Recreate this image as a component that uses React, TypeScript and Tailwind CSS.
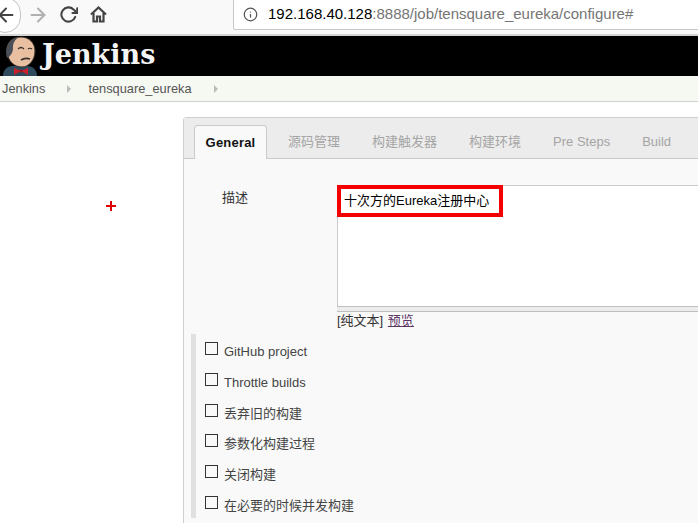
import { FiArrowLeft, FiArrowRight, FiInfo, FiRotateCw } from "react-icons/fi";

const FONT = "font-['Liberation_Sans','Noto_Sans_CJK_SC',sans-serif]";

const tabs = ["源码管理", "构建触发器", "构建环境", "Pre Steps", "Build"];
const options = ["GitHub project", "Throttle builds", "丢弃旧的构建", "参数化构建过程", "关闭构建", "在必要的时候并发构建"];

function HomeIcon() {
  return (
    <svg width="17" height="17" viewBox="0 0 17 17" fill="none" stroke="#444" strokeWidth="2.2">
      <path d="M1 8.5 8.5 1.5 16 8.5" />
      <path d="M3.5 7v8.5h3.5v-5h3v5h3.5V7" />
    </svg>
  );
}

function Butler() {
  return (
    <svg width="36" height="40" viewBox="0 0 36 40">
      <path d="M1 40c0-6 4-10 10-10h14c6 0 10 4 10 10z" fill="#2f4a5c" />
      <path d="M5 16C4 6 11 1 19 1c8 0 14 6 14 14 0 9-6 16-13 16C12 31 6 25 5 16z" fill="#e8bfa0" stroke="#3a3330" strokeWidth="1" />
      <path d="M5 22C2 12 6 3 17 1c-5 3-6 7-6 11 0 4-2 8-6 10z" fill="#4a4f58" />
      <path d="M16 13c2-2 4-2 6 0M26 13c1-1 3-1 4 0" fill="none" stroke="#3a3330" strokeWidth="1.2" />
      <path d="M19 24c3-2 6-2 9-1" fill="none" stroke="#3a3330" strokeWidth="1.600" />
      <path d="M12 32l7 3-7 4zM26 32l-7 3 7 4z" fill="#c8202c" />
      <circle cx="19" cy="35" r="1.600" fill="#a01820" />
    </svg>
  );
}

export default function App() {
  return (
    <div className={`w-[698px] h-[523px] overflow-hidden bg-white text-[13px] text-[#333] ${FONT}`}>
      <div className="h-[36px] bg-[#f9f9f9] border-b-2 border-[#d4d4d4] flex items-start relative">
        <div className="absolute -left-[11px] -top-[3px] w-[32px] h-[36px] rounded-full bg-white border border-[#c4c4c4] flex items-center justify-end pr-[3px]">
          <FiArrowLeft size={22} color="#444" strokeWidth={2.2} />
        </div>
        <div className="ml-[27px] mt-[4px]">
          <FiArrowRight size={22} color="#b0b0b0" strokeWidth={2.2} />
        </div>
        <div className="ml-[10px] mt-[5px]">
          <FiRotateCw size={19} color="#444" strokeWidth={2.6} />
        </div>
        <div className="ml-[12px] mt-[6px]">
          <HomeIcon />
        </div>
        <div className="ml-[126px] -mt-[1px] flex-1 h-[31px] bg-white border border-[#c8c8c8] rounded-[2px] flex items-center pl-[9px] mr-[-4px] text-[15px] text-[#757575]">
          <FiInfo size={15} color="#555" />
          <span className="ml-[10px] text-black">192.168.40.128</span>
          <span>:8888/job/tensquare_eureka/configure#</span>
        </div>
      </div>

      <div className="h-[40px] bg-black flex items-start">
        <div className="ml-[2px]">
          <Butler />
        </div>
        <span className="ml-[4px] mt-[1px] text-[27px] leading-[36px] font-bold text-[#f5f5f5] font-['DejaVu_Serif',serif]">
          Jenkins
        </span>
      </div>

      <div className="h-[26px] bg-[#f6f8f2] border-b border-[#d0d0d0] flex items-center text-[12.8px] text-[#555]">
        <span className="ml-[2px]">Jenkins</span>
        <span className="ml-[22px] w-0 h-0 border-y-[4px] border-y-transparent border-l-[4px] border-l-[#bbb]" />
        <span className="ml-[17px]">tensquare_eureka</span>
        <span className="ml-[22px] w-0 h-0 border-y-[4px] border-y-transparent border-l-[4px] border-l-[#bbb]" />
      </div>

      <div className="relative pl-[183px] pt-[15px]">
        <div className="absolute left-[106px] top-[99px] w-[10px] h-[10px]">
          <div className="absolute left-[4px] top-0 w-[2px] h-[10px] bg-[#e00000]" />
          <div className="absolute left-0 top-[4px] w-[10px] h-[2px] bg-[#e00000]" />
        </div>

        <div className="w-[560px] h-[420px] border border-[#cfcfcf] rounded-tl-[3px] bg-[#f9f9f9]">
          <div className="h-[41px] bg-[#ececec] border-b border-[#cacaca] flex items-end pl-[10px]">
            <div className="h-[34px] -mb-px mr-[5px] w-[73px] bg-[#f9f9f9] border border-b-0 border-[#cacaca] rounded-t-[4px] flex items-center justify-center font-bold text-[#111] tracking-[0.2px]">
              General
            </div>
            {tabs.map((tab) => (
              <div key={tab} className="h-[33px] px-[16px] flex items-center text-[#a5a5a5] whitespace-nowrap">
                {tab}
              </div>
            ))}
          </div>

          <div className="flex pt-[26px]">
            <div className="w-[153px] pl-[38px] pt-[5px] leading-[15px]">描述</div>
            <div className="flex-1 relative">
              <div className="h-[121px] bg-white border border-[#ccc] border-b-0 rounded-tl-[3px] pl-[6px] pt-[7px] text-black leading-[16px]">
                十次方的Eureka注册中心
              </div>
              <div className="h-[6px] bg-[#ececec] border-y border-[#bfbfbf]" />
              <div className="absolute left-0 top-0 w-[166px] h-[32px] border-[4px] border-[#f40000]" />
              <div className="mt-[1px] leading-[16px] text-[#333]">
                [纯文本]&nbsp;<a href="#" className="ml-[1px] text-[#5c3566] underline">预览</a>
              </div>
            </div>
          </div>

          <div className="ml-[7px] mt-[5px] w-[400px] border-l-[5px] border-[#e0e0e0] pl-[9px] h-[184px] pt-[8px] flex flex-col gap-[17.8px]">
            {options.map((option) => (
              <div key={option} className="h-[13px] flex items-start">
                <div className="w-[13px] h-[13px] border border-[#333]" />
                <span className="ml-[6px] mt-[1px] leading-[17px] text-[#444]">{option}</span>
              </div>
            ))}
          </div>
        </div>
      </div>
    </div>
  );
}
